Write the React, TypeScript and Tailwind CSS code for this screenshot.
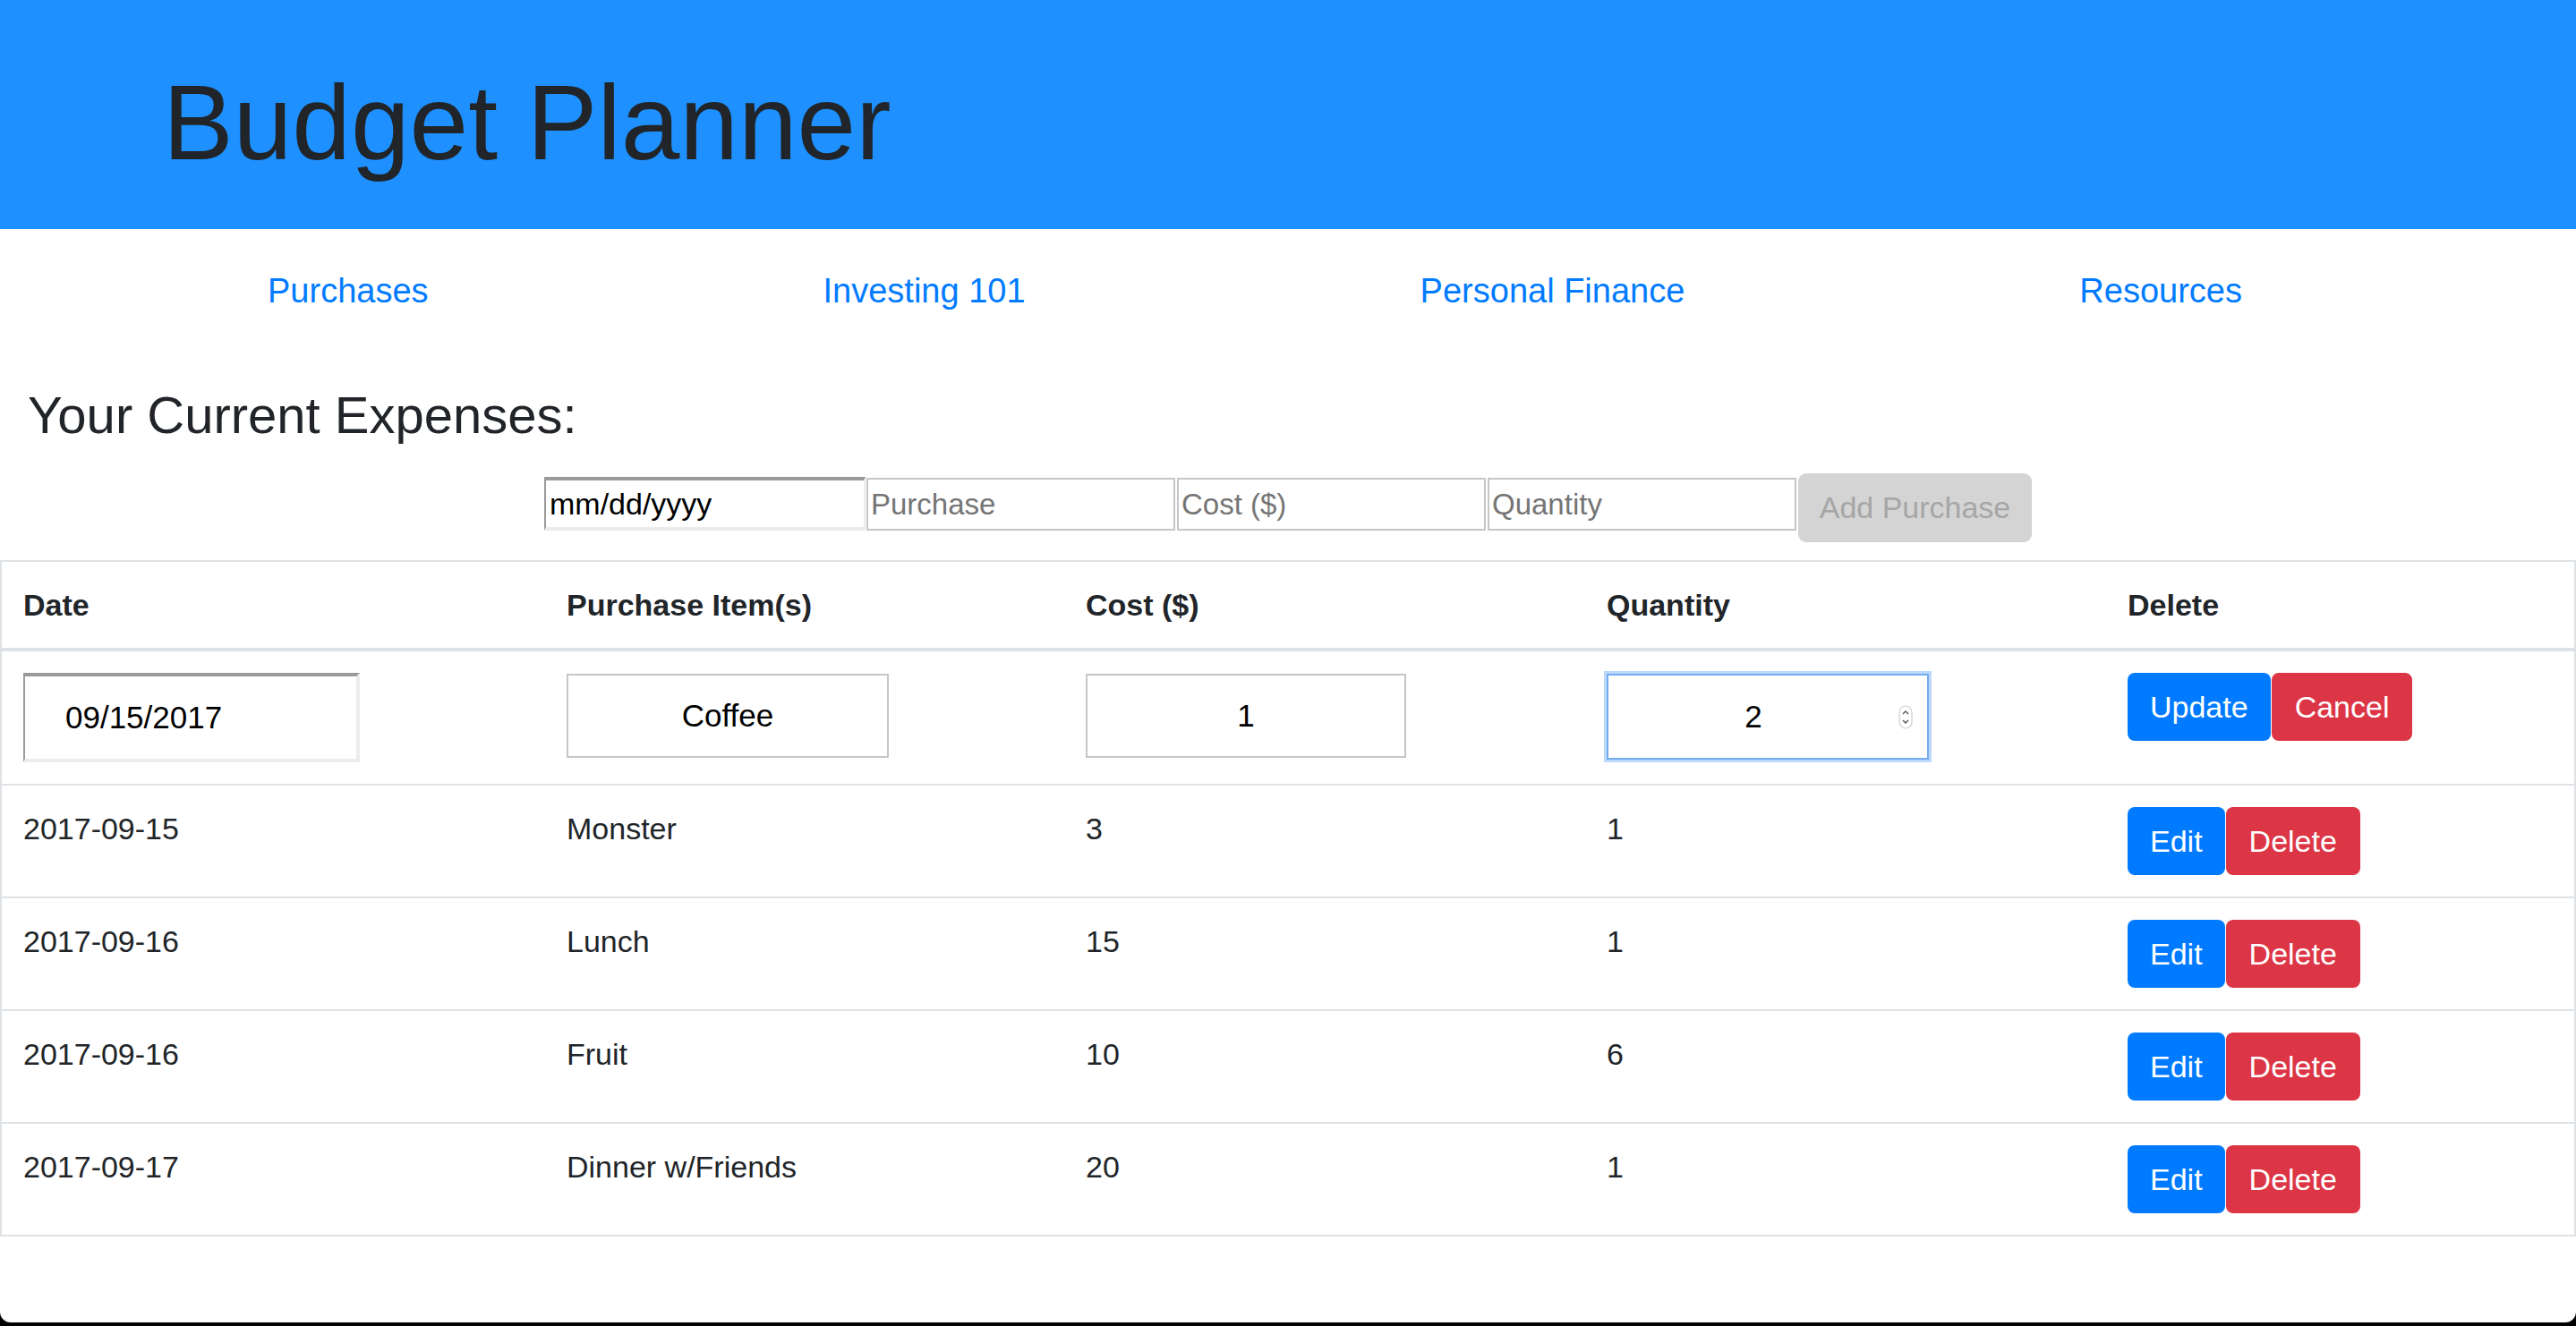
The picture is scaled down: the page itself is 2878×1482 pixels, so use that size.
import React from "react";

type Expense = { date: string; item: string; cost: string; qty: string };

const expenses: Expense[] = [
  { date: "2017-09-15", item: "Monster", cost: "3", qty: "1" },
  { date: "2017-09-16", item: "Lunch", cost: "15", qty: "1" },
  { date: "2017-09-16", item: "Fruit", cost: "10", qty: "6" },
  { date: "2017-09-17", item: "Dinner w/Friends", cost: "20", qty: "1" },
];

const cols = "grid grid-cols-[607px_580px_582px_582px_1fr]";

function Spinner() {
  return (
    <svg width="16" height="27" viewBox="0 0 16 27" className="shrink-0">
      <rect x="1" y="1" width="14" height="25" rx="7" fill="#fff" stroke="#cfcfcf" strokeWidth="1.2" />
      <path d="M5 10 L8 7 L11 10" fill="none" stroke="#555" strokeWidth="1.4" />
      <path d="M5 17 L8 20 L11 17" fill="none" stroke="#555" strokeWidth="1.4" />
    </svg>
  );
}

export default function App() {
  return (
    <div className="h-[1482px] bg-black font-['Liberation_Sans',Arial,sans-serif] text-[#212529]">
      <div className="h-[1478px] overflow-hidden rounded-b-[12px] bg-white">
        <header className="h-[256px] bg-[#1e90ff] pl-[182px] pt-[78px]">
          <h1 className="text-[118px] leading-none font-normal">Budget Planner</h1>
        </header>

        <nav className="flex justify-between pl-[299px] pr-[373px] pt-[41px] text-[38px] leading-[57px] text-[#007bff]">
          <a href="#purchases">Purchases</a>
          <a href="#investing">Investing 101</a>
          <a href="#finance">Personal Finance</a>
          <a href="#resources">Resources</a>
        </nav>

        <h3 className="mt-[75px] pl-[31px] text-[58px] leading-[70px]">Your Current Expenses:</h3>

        <form className="mt-[30px] flex h-[77px] items-start justify-center" onSubmit={(e) => e.preventDefault()}>
          <input
            readOnly
            value="mm/dd/yyyy"
            className="mt-[4px] h-[60px] w-[359px] border-t-[4px] border-l-[2px] border-b-[4px] border-r-[2px] border-t-[#9a9a9a] border-l-[#9a9a9a] border-b-[#ececec] border-r-[#ececec] pl-[4px] text-[34px] text-black outline-none"
          />
          <input
            placeholder="Purchase"
            className="mt-[5px] ml-[1px] h-[59px] w-[345px] border-2 border-[#c6c6c6] pl-[3px] text-[33px] outline-none placeholder:text-[#757575]"
          />
          <input
            placeholder="Cost ($)"
            className="mt-[5px] ml-[2px] h-[59px] w-[345px] border-2 border-[#c6c6c6] pl-[3px] text-[33px] outline-none placeholder:text-[#757575]"
          />
          <input
            placeholder="Quantity"
            className="mt-[5px] ml-[2px] h-[59px] w-[345px] border-2 border-[#c6c6c6] pl-[3px] text-[33px] outline-none placeholder:text-[#757575]"
          />
          <button
            type="button"
            disabled
            className="ml-[2px] h-[77px] w-[261px] rounded-[9px] bg-[#d4d4d4] text-[34px] text-[#a6a6a6]"
          >
            Add Purchase
          </button>
        </form>

        <div className="mt-[20px] border-x-2 border-t-2 border-[#dee2e6] text-[34px] leading-[48px]">
          <div className={`${cols} border-b-4 border-[#dee2e6] font-bold`}>
            <div className="px-[24px] py-[24px]">Date</div>
            <div className="px-[24px] py-[24px]">Purchase Item(s)</div>
            <div className="px-[24px] py-[24px]">Cost ($)</div>
            <div className="px-[24px] py-[24px]">Quantity</div>
            <div className="px-[24px] py-[24px]">Delete</div>
          </div>

          <div className={`${cols} border-b-2 border-[#dee2e6] text-black`}>
            <div className="px-[24px] py-[24px]">
              <div className="flex h-[100px] w-[376px] items-center border-t-[4px] border-l-[2px] border-b-[4px] border-r-[4px] border-t-[#9a9a9a] border-l-[#9a9a9a] border-b-[#ececec] border-r-[#ececec] pl-[45px] text-[35px]">
                09/15/2017
              </div>
            </div>
            <div className="px-[24px] py-[24px]">
              <div className="mt-[1px] flex h-[94px] w-[360px] items-center justify-center border-2 border-[#c6c6c6] text-[35px]">
                Coffee
              </div>
            </div>
            <div className="px-[24px] py-[24px]">
              <div className="mt-[1px] flex h-[94px] w-[358px] items-center justify-center border-2 border-[#c6c6c6] text-[35px]">
                1
              </div>
            </div>
            <div className="px-[24px] py-[24px]">
              <div className="mt-[1px] flex h-[96px] w-[360px] items-center border-2 border-[#74acf2] pr-[16px] text-[35px] shadow-[0_0_0_3px_#bcd9fb]">
                <span className="flex-1 text-center">2</span>
                <Spinner />
              </div>
            </div>
            <div className="flex items-start px-[24px] py-[24px]">
              <button type="button" className="h-[76px] rounded-[8px] bg-[#007bff] px-[25px] text-[34px] text-white">
                Update
              </button>
              <button type="button" className="ml-[1px] h-[76px] rounded-[8px] bg-[#dc3545] px-[26px] text-[34px] text-white">
                Cancel
              </button>
            </div>
          </div>

          {expenses.map((x, i) => (
            <div key={i} className={`${cols} border-b-2 border-[#dee2e6]`}>
              <div className="px-[24px] pt-[24px]">{x.date}</div>
              <div className="px-[24px] pt-[24px]">{x.item}</div>
              <div className="px-[24px] pt-[24px]">{x.cost}</div>
              <div className="px-[24px] pt-[24px]">{x.qty}</div>
              <div className="flex items-start px-[24px] py-[24px]">
                <button type="button" className="h-[76px] rounded-[8px] bg-[#007bff] px-[25px] text-[34px] text-white">
                  Edit
                </button>
                <button type="button" className="ml-[1px] h-[76px] rounded-[8px] bg-[#dc3545] px-[26px] text-[34px] text-white">
                  Delete
                </button>
              </div>
            </div>
          ))}
        </div>
      </div>
    </div>
  );
}
